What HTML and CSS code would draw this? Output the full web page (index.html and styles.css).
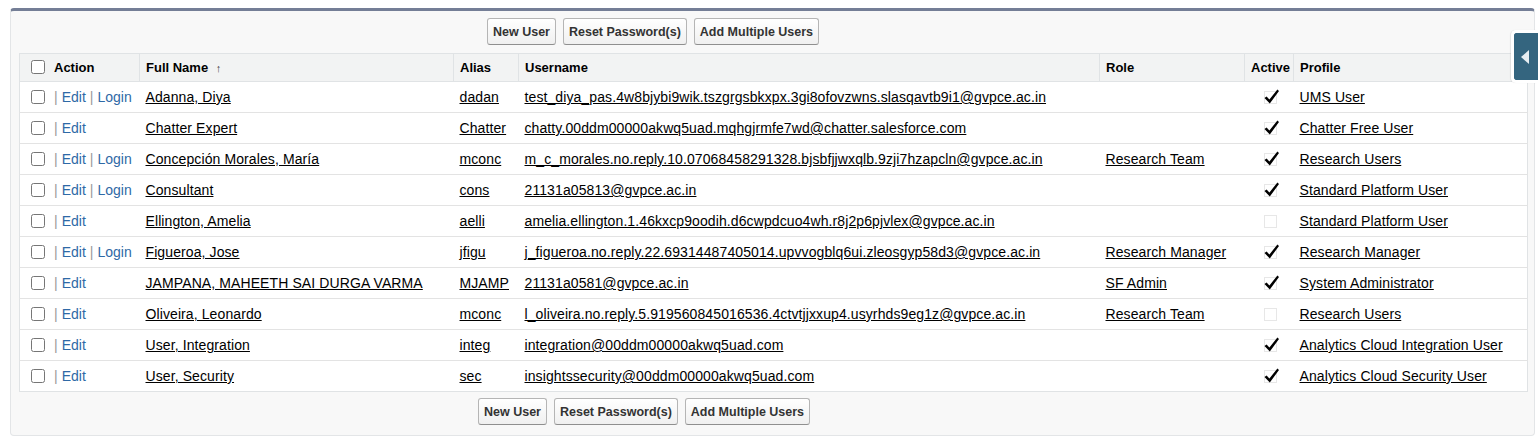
FILE: index.html
```html
<!DOCTYPE html>
<html>
<head>
<meta charset="utf-8">
<link rel="stylesheet" href="styles.css">
</head>
<body>
<div class="page">
  <div class="block">
    <div class="btnrow top">
      <button class="btn">New User</button>
      <button class="btn">Reset Password(s)</button>
      <button class="btn">Add Multiple Users</button>
    </div>
    <table class="list">
      <colgroup>
        <col style="width:120px"><col style="width:314px"><col style="width:65px"><col style="width:581px"><col style="width:145px"><col style="width:49px"><col>
      </colgroup>
      <thead>
        <tr>
          <th class="actcol"><input type="checkbox" class="cb"><span>Action</span></th>
          <th>Full Name <span class="arrow">&#8593;</span></th>
          <th>Alias</th>
          <th>Username</th>
          <th>Role</th>
          <th>Active</th>
          <th>Profile</th>
        </tr>
      </thead>
      <tbody>
        <tr>
          <td class="actcol"><input type="checkbox" class="cb"><span class="sep">|</span><a class="act">Edit</a><span class="sep">|</span><a class="act">Login</a></td>
          <td><a>Adanna, Diya</a></td><td><a>dadan</a></td>
          <td><a>test_diya_pas.4w8bjybi9wik.tszgrgsbkxpx.3gi8ofovzwns.slasqavtb9i1@gvpce.ac.in</a></td>
          <td></td><td class="chk"><svg class="ck" width="18" height="18" viewBox="0 0 18 18"><rect x="1.5" y="3.5" width="12" height="12" class="box"/><polygon class="mark" points="1.5,10 3.6,8.4 6.4,11.4 14.4,1.6 16,3 6.8,15.4"/></svg></td><td><a>UMS User</a></td>
        </tr>
        <tr>
          <td class="actcol"><input type="checkbox" class="cb"><span class="sep">|</span><a class="act">Edit</a></td>
          <td><a>Chatter Expert</a></td><td><a>Chatter</a></td>
          <td><a>chatty.00ddm00000akwq5uad.mqhgjrmfe7wd@chatter.salesforce.com</a></td>
          <td></td><td class="chk"><svg class="ck" width="18" height="18" viewBox="0 0 18 18"><rect x="1.5" y="3.5" width="12" height="12" class="box"/><polygon class="mark" points="1.5,10 3.6,8.4 6.4,11.4 14.4,1.6 16,3 6.8,15.4"/></svg></td><td><a>Chatter Free User</a></td>
        </tr>
        <tr>
          <td class="actcol"><input type="checkbox" class="cb"><span class="sep">|</span><a class="act">Edit</a><span class="sep">|</span><a class="act">Login</a></td>
          <td><a>Concepción Morales, María</a></td><td><a>mconc</a></td>
          <td><a>m_c_morales.no.reply.10.07068458291328.bjsbfjjwxqlb.9zji7hzapcln@gvpce.ac.in</a></td>
          <td><a>Research Team</a></td><td class="chk"><svg class="ck" width="18" height="18" viewBox="0 0 18 18"><rect x="1.5" y="3.5" width="12" height="12" class="box"/><polygon class="mark" points="1.5,10 3.6,8.4 6.4,11.4 14.4,1.6 16,3 6.8,15.4"/></svg></td><td><a>Research Users</a></td>
        </tr>
        <tr>
          <td class="actcol"><input type="checkbox" class="cb"><span class="sep">|</span><a class="act">Edit</a><span class="sep">|</span><a class="act">Login</a></td>
          <td><a>Consultant</a></td><td><a>cons</a></td>
          <td><a>21131a05813@gvpce.ac.in</a></td>
          <td></td><td class="chk"><svg class="ck" width="18" height="18" viewBox="0 0 18 18"><rect x="1.5" y="3.5" width="12" height="12" class="box"/><polygon class="mark" points="1.5,10 3.6,8.4 6.4,11.4 14.4,1.6 16,3 6.8,15.4"/></svg></td><td><a>Standard Platform User</a></td>
        </tr>
        <tr>
          <td class="actcol"><input type="checkbox" class="cb"><span class="sep">|</span><a class="act">Edit</a></td>
          <td><a>Ellington, Amelia</a></td><td><a>aelli</a></td>
          <td><a>amelia.ellington.1.46kxcp9oodih.d6cwpdcuo4wh.r8j2p6pjvlex@gvpce.ac.in</a></td>
          <td></td><td class="chk"><svg class="ck" width="18" height="18" viewBox="0 0 18 18"><rect x="1.5" y="3.5" width="12" height="12" class="box"/></svg></td><td><a>Standard Platform User</a></td>
        </tr>
        <tr>
          <td class="actcol"><input type="checkbox" class="cb"><span class="sep">|</span><a class="act">Edit</a><span class="sep">|</span><a class="act">Login</a></td>
          <td><a>Figueroa, Jose</a></td><td><a>jfigu</a></td>
          <td><a>j_figueroa.no.reply.22.69314487405014.upvvogblq6ui.zleosgyp58d3@gvpce.ac.in</a></td>
          <td><a>Research Manager</a></td><td class="chk"><svg class="ck" width="18" height="18" viewBox="0 0 18 18"><rect x="1.5" y="3.5" width="12" height="12" class="box"/><polygon class="mark" points="1.5,10 3.6,8.4 6.4,11.4 14.4,1.6 16,3 6.8,15.4"/></svg></td><td><a>Research Manager</a></td>
        </tr>
        <tr>
          <td class="actcol"><input type="checkbox" class="cb"><span class="sep">|</span><a class="act">Edit</a></td>
          <td><a>JAMPANA, MAHEETH SAI DURGA VARMA</a></td><td><a>MJAMP</a></td>
          <td><a>21131a0581@gvpce.ac.in</a></td>
          <td><a>SF Admin</a></td><td class="chk"><svg class="ck" width="18" height="18" viewBox="0 0 18 18"><rect x="1.5" y="3.5" width="12" height="12" class="box"/><polygon class="mark" points="1.5,10 3.6,8.4 6.4,11.4 14.4,1.6 16,3 6.8,15.4"/></svg></td><td><a>System Administrator</a></td>
        </tr>
        <tr>
          <td class="actcol"><input type="checkbox" class="cb"><span class="sep">|</span><a class="act">Edit</a></td>
          <td><a>Oliveira, Leonardo</a></td><td><a>mconc</a></td>
          <td><a>l_oliveira.no.reply.5.919560845016536.4ctvtjjxxup4.usyrhds9eg1z@gvpce.ac.in</a></td>
          <td><a>Research Team</a></td><td class="chk"><svg class="ck" width="18" height="18" viewBox="0 0 18 18"><rect x="1.5" y="3.5" width="12" height="12" class="box"/></svg></td><td><a>Research Users</a></td>
        </tr>
        <tr>
          <td class="actcol"><input type="checkbox" class="cb"><span class="sep">|</span><a class="act">Edit</a></td>
          <td><a>User, Integration</a></td><td><a>integ</a></td>
          <td><a>integration@00ddm00000akwq5uad.com</a></td>
          <td></td><td class="chk"><svg class="ck" width="18" height="18" viewBox="0 0 18 18"><rect x="1.5" y="3.5" width="12" height="12" class="box"/><polygon class="mark" points="1.5,10 3.6,8.4 6.4,11.4 14.4,1.6 16,3 6.8,15.4"/></svg></td><td><a>Analytics Cloud Integration User</a></td>
        </tr>
        <tr>
          <td class="actcol"><input type="checkbox" class="cb"><span class="sep">|</span><a class="act">Edit</a></td>
          <td><a>User, Security</a></td><td><a>sec</a></td>
          <td><a>insightssecurity@00ddm00000akwq5uad.com</a></td>
          <td></td><td class="chk"><svg class="ck" width="18" height="18" viewBox="0 0 18 18"><rect x="1.5" y="3.5" width="12" height="12" class="box"/><polygon class="mark" points="1.5,10 3.6,8.4 6.4,11.4 14.4,1.6 16,3 6.8,15.4"/></svg></td><td><a>Analytics Cloud Security User</a></td>
        </tr>
      </tbody>
    </table>
    <div class="btnrow bottom">
      <button class="btn">New User</button>
      <button class="btn">Reset Password(s)</button>
      <button class="btn">Add Multiple Users</button>
    </div>
  </div>
  <div class="sidetab"><span class="tri"></span></div>
</div>
</body>
</html>
```

FILE: styles.css
```css
html, body {
  margin: 0;
  padding: 0;
  background: #ffffff;
}
body {
  font-family: "Liberation Sans", Arial, sans-serif;
  font-size: 14px;
  color: #000;
}
.page {
  position: relative;
  padding: 8px 3px 0 10px;
  width: 1538px;
  box-sizing: border-box;
  height: 438px;
}
.block {
  background: #f8f8f8;
  border: 1px solid #e3e5e7;
  border-top: 3px solid #747e96;
  border-radius: 4px;
  padding: 7px 6px 11px 8px;
  height: 428px;
  box-sizing: border-box;
}
.btnrow {
  display: flex;
  gap: 7px;
}
.btnrow.top {
  padding-left: 468px;
  margin-bottom: 8px;
}
.btnrow.bottom {
  padding-left: 459px;
  margin-top: 6px;
}
.btn {
  font-family: "Liberation Sans", Arial, sans-serif;
  font-weight: bold;
  font-size: 12.5px;
  color: #333;
  height: 27px;
  padding: 0 5px;
  background: linear-gradient(#ffffff, #f0f0f0);
  border: 1px solid #b5b5b5;
  border-bottom-color: #8f8f8f;
  border-radius: 3px;
  cursor: pointer;
}
.list {
  width: 1509px;
  border-collapse: collapse;
  table-layout: fixed;
  background: #fff;
  border: 1px solid #e0e3e5;
}
.list th {
  background: #f2f3f3;
  font-size: 13px;
  font-weight: bold;
  text-align: left;
  height: 27px;
  padding: 0 6px;
  border-left: 1px solid #e0e3e5;
  border-bottom: 1px solid #e0e3e5;
  white-space: nowrap;
}
.list th:first-child {
  border-left: none;
}
.list td {
  height: 30px;
  padding: 0 6px;
  border-bottom: 1px solid #e3e3e3;
  white-space: nowrap;
  overflow: hidden;
  letter-spacing: 0.1px;
}
.list tbody tr:last-child td {
  border-bottom: none;
}
.list td a {
  color: #000;
  text-decoration: underline;
}
.list .actcol {
  padding-left: 8px;
  letter-spacing: 0;
}
.cb {
  width: 14px;
  height: 14px;
  margin: 0 9px 0 3px;
  vertical-align: -2px;
}
.arrow {
  font-size: 11px;
  margin-left: 4px;
  color: #444;
}
.sep {
  color: #999;
  margin-right: 4px;
}
.list td a.act {
  color: #2e69a6;
  text-decoration: none;
  margin-right: 4px;
}
.chk {
  text-align: center;
}
.list td.chk {
  padding: 0 0 0 5px;
}
.ck {
  vertical-align: -2px;
}
.ck .box {
  fill: none;
  stroke: #cfcfcf;
  stroke-width: 1;
  stroke-dasharray: 1 1;
}
.ck .mark {
  fill: #000;
}
.sidetab {
  position: absolute;
  left: 1511px;
  top: 30px;
  width: 24px;
  height: 47px;
  background: #34657f;
  border: 3px solid #fff;
  border-right: none;
  border-radius: 5px 0 0 5px;
  box-shadow: -1px 0 1px rgba(0,0,0,0.08);
}
.tri {
  position: absolute;
  left: 7px;
  top: 17px;
  width: 0;
  height: 0;
  border-top: 7px solid transparent;
  border-bottom: 7px solid transparent;
  border-right: 8px solid #e6eef2;
}
```
